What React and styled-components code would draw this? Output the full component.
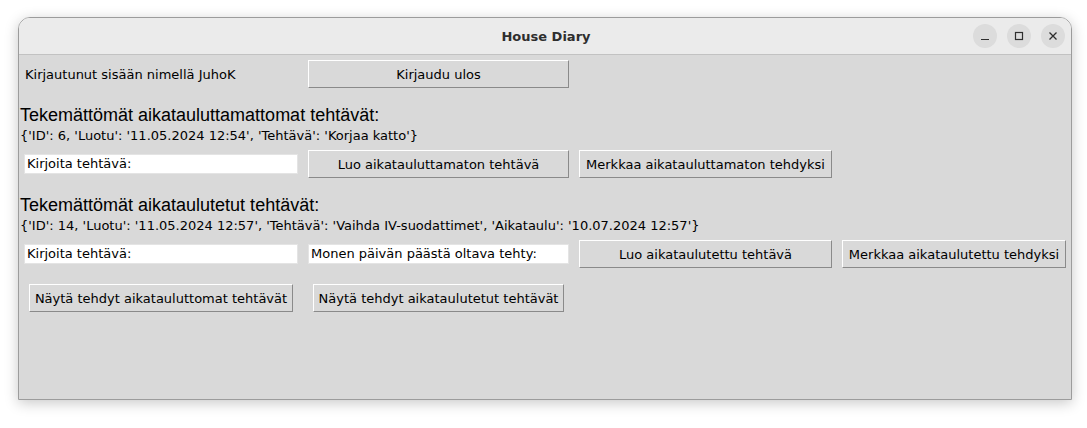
import React from 'react'
import styled, { createGlobalStyle } from 'styled-components'

const GlobalStyle = createGlobalStyle`
  html, body {
    margin: 0;
    padding: 0;
    background: #ffffff;
  }
`

const Desktop = styled.div`
  width: 1087px;
  height: 428px;
  padding: 17px 0 0 18px;
  box-sizing: border-box;
`

const Window = styled.div`
  width: 1054px;
  height: 383px;
  border: 1px solid #9c9c9c;
  border-radius: 12px 12px 0 0;
  overflow: hidden;
  box-sizing: border-box;
  display: flex;
  flex-direction: column;
  box-shadow: 0 3px 14px rgba(0, 0, 0, 0.22);
`

const TitleBar = styled.div`
  height: 36px;
  flex: none;
  background: #ebebeb;
  border-bottom: 1px solid #c2c2c2;
  display: grid;
  grid-template-columns: 1fr auto 1fr;
  align-items: center;
  font-family: "DejaVu Sans", sans-serif;
  font-weight: bold;
  font-size: 13px;
  color: #2e2e2e;
`

const Title = styled.div`
  grid-column: 2;
  padding-left: 2px;
`

const Controls = styled.div`
  grid-column: 3;
  justify-self: end;
  display: flex;
  gap: 10px;
  padding-right: 6px;
`

const CircleButton = styled.div`
  width: 24px;
  height: 24px;
  border-radius: 50%;
  background: #dcdcdc;
  display: flex;
  align-items: center;
  justify-content: center;
`

const Content = styled.div`
  flex: 1;
  background: #d9d9d9;
  padding-top: 5px;
  display: grid;
  grid-template-columns: 284px 271px 263px 234px;
  grid-auto-rows: min-content;
  align-content: start;
  font-family: "DejaVu Sans", sans-serif;
  font-size: 13px;
  color: #000;
`

const Label = styled.div`
  align-self: center;
  padding-left: 6px;
`

const Heading = styled.div`
  grid-column: 1 / -1;
  font-family: "Liberation Sans", Arial, sans-serif;
  font-size: 18px;
  line-height: 21px;
  padding-left: 1px;
  margin-top: 17px;
`

const Record = styled.div`
  grid-column: 1 / -1;
  line-height: 16px;
  padding-left: 1px;
  margin-top: 2px;
  margin-bottom: 6px;
  white-space: nowrap;
`

const Button = styled.div`
  height: 28px;
  margin: 0 5px;
  box-sizing: border-box;
  border-top: 1px solid #ffffff;
  border-left: 1px solid #ffffff;
  border-bottom: 1px solid #8a8a8a;
  border-right: 1px solid #8a8a8a;
  background: #d9d9d9;
  display: flex;
  align-items: center;
  justify-content: center;
  white-space: nowrap;
  ${(p) => p.$natural && `
    justify-self: center;
    margin: 0;
    padding: 0 5px;
  `}
`

const Entry = styled.div`
  align-self: center;
  height: 20px;
  margin: 0 5px;
  box-sizing: border-box;
  background: #ffffff;
  border: 1px solid #e4e4e4;
  padding-left: 2px;
  line-height: 18px;
  white-space: nowrap;
  overflow: hidden;
`

const Spacer = styled.div`
  grid-column: 1 / -1;
  height: ${(p) => p.$h}px;
`

const MinIcon = () => (
  <svg width="10" height="10" viewBox="0 0 10 10">
    <line x1="1" y1="8.5" x2="9" y2="8.5" stroke="#2e2e2e" strokeWidth="1.2" />
  </svg>
)

const MaxIcon = () => (
  <svg width="10" height="10" viewBox="0 0 10 10">
    <rect x="1.5" y="1.5" width="7" height="7" fill="none" stroke="#2e2e2e" strokeWidth="1.2" />
  </svg>
)

const CloseIcon = () => (
  <svg width="10" height="10" viewBox="0 0 10 10">
    <path d="M1.5 1.5 L8.5 8.5 M8.5 1.5 L1.5 8.5" stroke="#2e2e2e" strokeWidth="1.3" />
  </svg>
)

const App = () => {
  return (
    <Desktop>
      <GlobalStyle />
      <Window>
        <TitleBar>
          <Title>House Diary</Title>
          <Controls>
            <CircleButton><MinIcon /></CircleButton>
            <CircleButton><MaxIcon /></CircleButton>
            <CircleButton><CloseIcon /></CircleButton>
          </Controls>
        </TitleBar>
        <Content>
          <Label>Kirjautunut sisään nimellä JuhoK</Label>
          <Button>Kirjaudu ulos</Button>
          <div />
          <div />

          <Heading>Tekemättömät aikatauluttamattomat tehtävät:</Heading>
          <Record>{"{'ID': 6, 'Luotu': '11.05.2024 12:54', 'Tehtävä': 'Korjaa katto'}"}</Record>
          <Entry>Kirjoita tehtävä:</Entry>
          <Button>Luo aikatauluttamaton tehtävä</Button>
          <Button>Merkkaa aikatauluttamaton tehdyksi</Button>
          <div />

          <Heading>Tekemättömät aikataulutetut tehtävät:</Heading>
          <Record>{"{'ID': 14, 'Luotu': '11.05.2024 12:57', 'Tehtävä': 'Vaihda IV-suodattimet', 'Aikataulu': '10.07.2024 12:57'}"}</Record>
          <Entry>Kirjoita tehtävä:</Entry>
          <Entry>Monen päivän päästä oltava tehty:</Entry>
          <Button>Luo aikataulutettu tehtävä</Button>
          <Button>Merkkaa aikataulutettu tehdyksi</Button>

          <Spacer $h={16} />
          <Button $natural>Näytä tehdyt aikatauluttomat tehtävät</Button>
          <Button $natural>Näytä tehdyt aikataulutetut tehtävät</Button>
        </Content>
      </Window>
    </Desktop>
  )
}

export default App
